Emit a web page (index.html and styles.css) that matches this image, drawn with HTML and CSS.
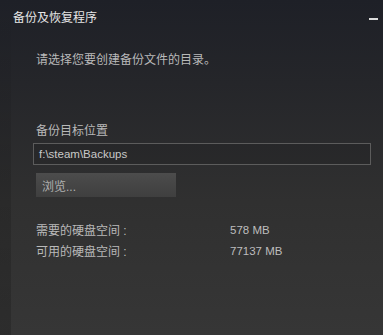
FILE: index.html
```html
<!DOCTYPE html>
<html lang="zh-CN">
<head>
  <meta charset="UTF-8" />
  <title>备份及恢复程序</title>
  <link rel="stylesheet" href="styles.css">
</head>
<body>
  <div class="window">
    <div class="titlebar">
      <span class="title">备份及恢复程序</span>
      <span class="minimize"></span>
    </div>
    <div class="content">
      <p class="intro">请选择您要创建备份文件的目录。</p>

      <div class="label">备份目标位置</div>
      <div class="path-input">f:\steam\Backups</div>
      <button class="browse">浏览...</button>

      <div class="space">
        <div class="space-row">
          <span class="space-name">需要的硬盘空间 :</span>
          <span class="space-value">578 MB</span>
        </div>
        <div class="space-row">
          <span class="space-name">可用的硬盘空间 :</span>
          <span class="space-value">77137 MB</span>
        </div>
      </div>
    </div>
  </div>
</body>
</html>
```

FILE: styles.css
```css
html, body {
  margin: 0;
  height: 100%;
}
body {
  font-family: "Liberation Sans", Arial, "Noto Sans CJK SC", sans-serif;
  background: #2d2d2d;
}
.window {
  height: 335px;
  background: linear-gradient(to bottom, #1e2027 0%, #25262a 25%, #303030 60%, #363636 100%);
  position: relative;
  overflow: hidden;
}
.window::before {
  content: "";
  position: absolute;
  left: 0;
  top: 0;
  bottom: 0;
  width: 11px;
  background: linear-gradient(to bottom, rgba(0,0,0,0) 0%, rgba(0,0,0,0.12) 50%, rgba(0,0,0,0.18) 100%);
}
.titlebar {
  display: flex;
  align-items: center;
  height: 18px;
  padding: 7px 0 0 13px;
}
.title {
  flex: 1;
  color: #e6e6e6;
  font-size: 12px;
}
.minimize {
  flex: none;
  display: block;
  width: 9px;
  height: 2px;
  background: #dcdcdc;
  margin: 5px 5px 0 0;
}
.content {
  padding: 0 12px 0 36px;
  color: #b9b9b9;
  font-size: 12px;
}
.intro {
  margin: 25px 0 0;
}
.label {
  margin-top: 54px;
}
.path-input {
  margin: 5px 0 0 -3px;
  height: 20px;
  line-height: 20px;
  border: 1px solid #5c5c5c;
  padding-left: 5px;
  color: #c8c8c8;
  font-size: 11.5px;
  background: rgba(0,0,0,0.08);
}
.browse {
  display: block;
  margin-top: 8px;
  width: 140px;
  height: 24px;
  border: none;
  padding: 0 0 0 6px;
  text-align: left;
  font-family: inherit;
  font-size: 12px;
  color: #b0b0b0;
  background: linear-gradient(to bottom, #4c4c4c, #3f3f3f);
}
.space {
  margin-top: 22px;
}
.space-row {
  display: flex;
  height: 21px;
  align-items: center;
}
.space-name {
  width: 194px;
}
.space-value {
  color: #bdbdbd;
  font-size: 11.5px;
}
```
